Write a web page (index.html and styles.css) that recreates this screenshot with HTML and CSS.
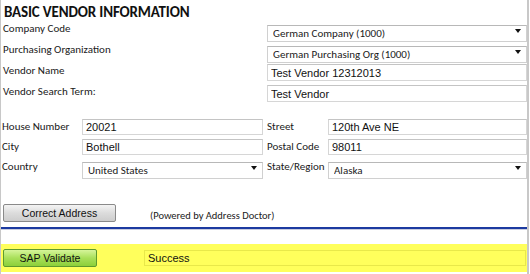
FILE: index.html
```html
<!DOCTYPE html>
<html lang="en">
<head>
  <meta charset="UTF-8" />
  <title>Basic Vendor Information</title>
  <link rel="stylesheet" href="styles.css">
</head>
<body>
  <div class="panel">
    <h1>BASIC VENDOR INFORMATION</h1>

    <div class="vendor-grid">
      <label>Company Code</label>
      <div class="select-wrap">
        <select><option>German Company (1000)</option></select>
      </div>

      <label>Purchasing Organization</label>
      <div class="select-wrap">
        <select><option>German Purchasing Org (1000)</option></select>
      </div>

      <label>Vendor Name</label>
      <input type="text" value="Test Vendor 12312013">

      <label>Vendor Search Term:</label>
      <input type="text" value="Test Vendor">
    </div>

    <div class="address-grid">
      <label>House Number</label>
      <input type="text" value="20021">
      <label>Street</label>
      <input type="text" value="120th Ave NE">

      <label>City</label>
      <input type="text" value="Bothell">
      <label>Postal Code</label>
      <input type="text" value="98011">

      <label>Country</label>
      <div class="select-wrap">
        <select><option>United States</option></select>
      </div>
      <label>State/Region</label>
      <div class="select-wrap">
        <select><option>Alaska</option></select>
      </div>
    </div>

    <div class="address-actions">
      <button class="btn btn-gray">Correct Address</button>
      <span class="powered">(Powered by Address Doctor)</span>
    </div>

    <div class="divider"></div>

    <div class="validate-bar">
      <button class="btn btn-green">SAP Validate</button>
      <input type="text" class="status" value="Success">
    </div>
  </div>
</body>
</html>
```

FILE: styles.css
```css
body {
  margin: 0;
  background: #ffffff;
  font-family: Carlito, Lato, 'Open Sans', sans-serif;
  color: #1a1a1a;
}

.panel {
  width: 526px;
  height: 274px;
  border-left: 1px solid #c8c8c8;
  border-right: 2px solid #c8c8c8;
  box-sizing: content-box;
}

h1 {
  margin: 0;
  padding: 3px 0 0 3px;
  height: 18px;
  font-size: 15px;
  font-weight: bold;
  letter-spacing: -0.15px;
  color: #111;
}

label {
  font-size: 11px;
  line-height: 13px;
  padding-top: 1px;
  color: #1a1a1a;
  white-space: nowrap;
}

input[type="text"] {
  box-sizing: border-box;
  height: 16px;
  margin: 0;
  padding: 0 3px;
  border: 1px solid #d6d6d6;
  border-top-color: #c4c4c4;
  font-family: 'Liberation Sans', Arial, sans-serif;
  font-size: 10.5px;
  color: #111;
  background: #fff;
  outline: none;
}

.select-wrap {
  position: relative;
  height: 17px;
}

.select-wrap select {
  appearance: none;
  -webkit-appearance: none;
  box-sizing: border-box;
  width: 100%;
  height: 17px;
  margin: 0;
  padding: 0 14px 0 5px;
  border: 1px solid #d0d0d0;
  border-top-color: #b8b8b8;
  border-radius: 0;
  background: #fff;
  font-family: Carlito, Lato, 'Open Sans', sans-serif;
  font-size: 11px;
  color: #1a1a1a;
  outline: none;
}

.select-wrap::after {
  content: "";
  position: absolute;
  right: 6px;
  top: 7px;
  border-left: 3px solid transparent;
  border-right: 3px solid transparent;
  border-top: 4px solid #111;
  pointer-events: none;
}

.vendor-grid {
  display: grid;
  grid-template-columns: 264px 260px;
  row-gap: 4px;
  padding-left: 2px;
  margin-top: 1px;
}

.vendor-grid input[type="text"] {
  height: 17px;
  font-size: 11px;
}

.vendor-grid label {
  padding-top: 0;
}

.address-grid {
  display: grid;
  grid-template-columns: 80px 181px 65px 199px;
  row-gap: 4px;
  padding-left: 1px;
  margin-top: 17px;
}

.address-grid label:nth-child(4n+3) {
  padding-left: 4px;
}

.address-grid input[type="text"] {
  height: 16px;
  font-size: 11px;
}

.address-actions {
  display: flex;
  align-items: center;
  padding-left: 2px;
  margin-top: 28px;
  height: 18px;
}

.btn {
  box-sizing: border-box;
  height: 18px;
  padding: 0;
  font-family: 'Liberation Sans', Arial, sans-serif;
  font-size: 10.5px;
  color: #111;
  border-radius: 2px;
  cursor: pointer;
}

.btn-gray {
  width: 113px;
  border: 1px solid #8a8a8a;
  background: linear-gradient(to bottom, #f4f4f4, #dcdcdc 50%, #cdcdcd);
}

.powered {
  margin-left: 34px;
  margin-top: 4px;
  font-size: 10.5px;
  color: #1a1a1a;
}

.divider {
  margin-top: 5px;
  height: 2px;
  background: #1c3aa0;
  border-bottom: 1px solid #c9cde0;
}

.validate-bar {
  display: flex;
  align-items: center;
  margin-top: 14px;
  height: 28px;
  padding-left: 2px;
  background: #ffff5c;
}

.btn-green {
  width: 94px;
  height: 18px;
  border: 1px solid #5d9a2e;
  background: linear-gradient(to bottom, #d6f59a, #a9e05a 50%, #8ccf3a);
}

.validate-bar .status {
  margin-left: 47px;
  width: 382px;
  height: 16px;
  background: #ffff5c;
  border: 1px solid #e8e84a;
  font-size: 11px;
}
```
